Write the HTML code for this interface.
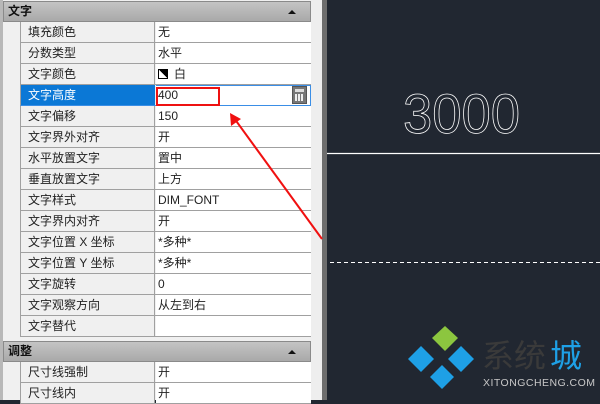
<!DOCTYPE html><html><head><meta charset="utf-8"><style>
*{margin:0;padding:0;box-sizing:border-box}
body{width:600px;height:400px;overflow:hidden;background:#212731;position:relative;font-family:"Liberation Sans","Noto Sans CJK SC",sans-serif;font-size:12px;color:#000}
#panel{position:absolute;left:0;top:0;width:311px;height:400px;background:#f0f0f0;border-left:3px solid #b8b8b8}
.hdr{position:absolute;left:0;width:308px;height:21px;background:linear-gradient(#c4c4c4,#a9a9a9);border:1px solid #8a8a8a;font-weight:bold;line-height:19px;padding-left:4px;color:#111}
.hdr:after{content:"";position:absolute;right:14px;top:8px;border-left:4px solid transparent;border-right:4px solid transparent;border-bottom:4px solid #111}
.row{position:absolute;left:17px;width:291px;height:21px;border-bottom:1px solid #a0a0a0;border-left:1px solid #a0a0a0}
.n{position:absolute;left:0;top:0;width:134px;height:20px;background:#f0f0f0;line-height:20px;padding-left:7px;border-right:1px solid #a0a0a0;color:#222}
.v{position:absolute;left:135px;top:0;right:0;height:20px;background:#fff;line-height:20px;padding-left:2px;color:#222}
#sb{position:absolute;left:311px;top:0;width:11px;height:400px;background:#eeeeee}
#sb2{position:absolute;left:322px;top:0;width:5px;height:400px;background:#6e6e6e}
</style></head><body>
<div id="panel">
<div class="hdr" style="top:1px">文字</div>
<div class="row" style="top:22px"><div class="n">填充颜色</div><div class="v">无</div></div>
<div class="row" style="top:43px"><div class="n">分数类型</div><div class="v">水平</div></div>
<div class="row" style="top:64px"><div class="n">文字颜色</div><div class="v"><span style="display:inline-block;width:10px;height:10px;border:1px solid #000;background:linear-gradient(45deg,#fff 50%,#000 50%);vertical-align:-1px;margin-right:6px"></span>白</div></div>
<div class="row" style="top:85px;border-bottom-color:#3a8ee6"><div class="n" style="background:#0b78d6;color:#fff;border-right-color:#0b78d6">文字高度</div><div class="v" style="border-top:1px solid #3a8ee6;border-right:1px solid #3a8ee6;line-height:18px"><span style="position:absolute;left:0;top:1px;width:64px;height:19px;border:2px solid #e11;"></span>400<span style="position:absolute;right:3px;top:0;width:15px;height:18px;background:#777;border:1px solid #555"><span style="position:absolute;left:2px;top:2px;width:9px;height:3px;background:#ddd"></span><span style="position:absolute;left:2px;top:7px;width:9px;height:7px;background:repeating-linear-gradient(90deg,#eee 0 2px,#777 2px 3px)"></span></span></div></div>
<div class="row" style="top:106px"><div class="n">文字偏移</div><div class="v">150</div></div>
<div class="row" style="top:127px"><div class="n">文字界外对齐</div><div class="v">开</div></div>
<div class="row" style="top:148px"><div class="n">水平放置文字</div><div class="v">置中</div></div>
<div class="row" style="top:169px"><div class="n">垂直放置文字</div><div class="v">上方</div></div>
<div class="row" style="top:190px"><div class="n">文字样式</div><div class="v">DIM_FONT</div></div>
<div class="row" style="top:211px"><div class="n">文字界内对齐</div><div class="v">开</div></div>
<div class="row" style="top:232px"><div class="n">文字位置 X 坐标</div><div class="v">*多种*</div></div>
<div class="row" style="top:253px"><div class="n">文字位置 Y 坐标</div><div class="v">*多种*</div></div>
<div class="row" style="top:274px"><div class="n">文字旋转</div><div class="v">0</div></div>
<div class="row" style="top:295px"><div class="n">文字观察方向</div><div class="v">从左到右</div></div>
<div class="row" style="top:316px"><div class="n">文字替代</div><div class="v"></div></div>
<div class="hdr" style="top:341px">调整</div>
<div class="row" style="top:362px"><div class="n">尺寸线强制</div><div class="v">开</div></div>
<div class="row" style="top:383px"><div class="n">尺寸线内</div><div class="v">开</div></div>
</div>
<div id="sb"></div><div id="sb2"></div>
<svg width="600" height="400" style="position:absolute;left:0;top:0">
<text x="403" y="133" font-family="Liberation Sans" font-size="56" fill="none" stroke="#fff" stroke-width="0.8" textLength="117" lengthAdjust="spacingAndGlyphs">3000</text>
<line x1="327" y1="153.5" x2="600" y2="153.5" stroke="#fff" stroke-width="1.2"/>
<line x1="330" y1="262.5" x2="600" y2="262.5" stroke="#fff" stroke-width="1" stroke-dasharray="4,3"/>
<line x1="234" y1="118" x2="322" y2="239" stroke="#f01010" stroke-width="2"/>
<polygon points="230,113 231,126 241,119" fill="#f01010"/>
<g>
<polygon points="432,338 445,326 458,338 445,351" fill="#8cc63f"/>
<polygon points="408,359 421,346 434,359 421,372" fill="#1ea0e6"/>
<polygon points="448,359 461,346 474,359 461,372" fill="#1ea0e6"/>
<polygon points="430,377 442,365 454,377 442,389" fill="#1ea0e6"/>
</g>
<text x="482" y="367" font-family="Noto Sans CJK SC" font-size="32" fill="#3a3a3a">系统</text>
<text x="550" y="367" font-family="Noto Sans CJK SC" font-size="32" fill="#1ea0e6">城</text>
<text x="483" y="386" font-family="Liberation Sans" font-size="10.5" fill="#c8c8c8" textLength="112">XITONGCHENG.COM</text>
</svg>
</body></html>
